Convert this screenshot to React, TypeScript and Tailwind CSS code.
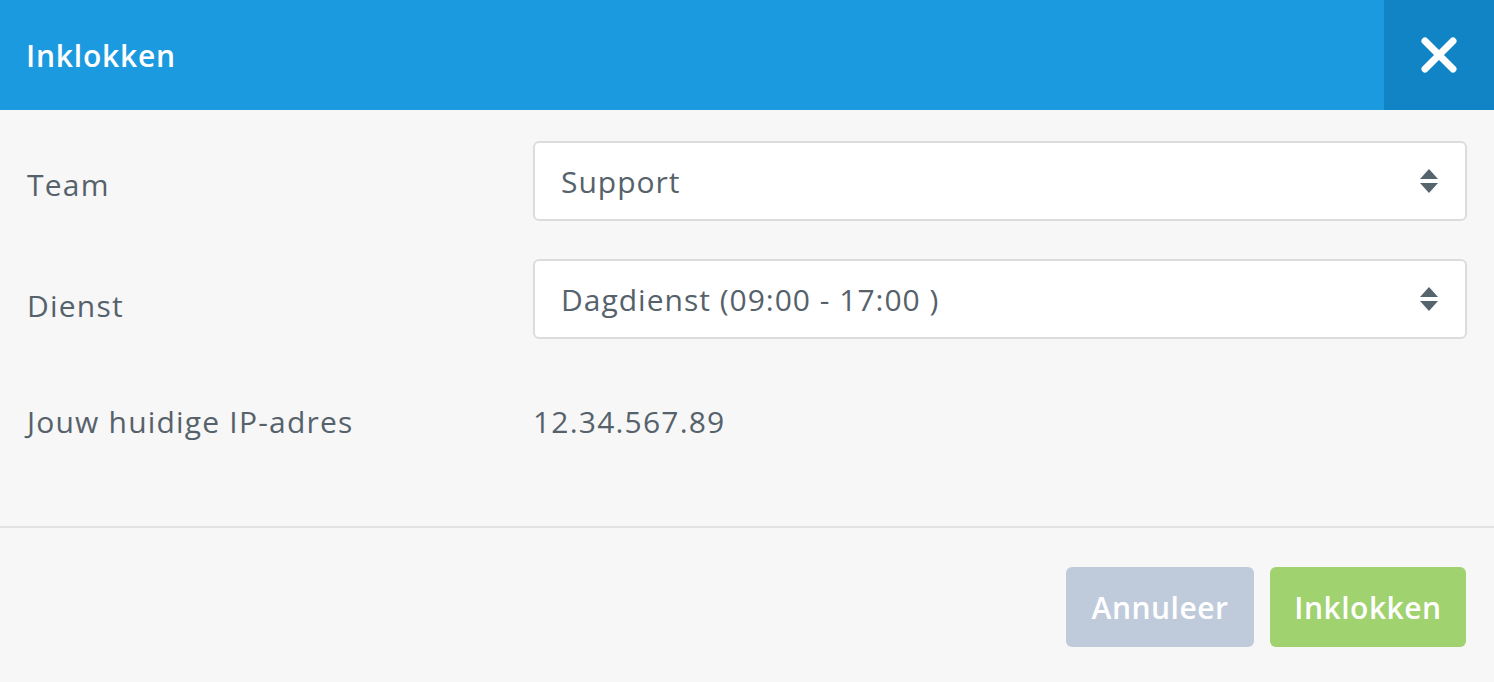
import React from 'react';

const font = { fontFamily: '"Open Sans", Lato, sans-serif' };

function SelectBox({ value }: { value: string }) {
  return (
    <div className="flex h-[80px] flex-1 items-center justify-between rounded-[6px] border-2 border-[#dcdcdc] bg-white pl-[26px] pr-[26px]">
      <span className="text-[30px] tracking-[1px] text-[#56626b]">{value}</span>
      <svg width="20" height="26" viewBox="0 0 20 26" className="fill-[#56646d]">
        <path d="M10 1 L19 11 L1 11 Z" />
        <path d="M1 15 L19 15 L10 25 Z" />
      </svg>
    </div>
  );
}

export default function App() {
  return (
    <div className="flex h-[682px] w-[1494px] flex-col bg-[#f7f7f7]" style={font}>
      <div className="flex h-[110px] bg-[#1b9ae0]">
        <h1 className="flex flex-1 items-center pl-[26px] text-[30px] font-semibold tracking-[0.8px] text-white">
          Inklokken
        </h1>
        <button className="flex w-[110px] items-center justify-center bg-[#1184c6]">
          <svg width="38" height="38" viewBox="0 0 38 38">
            <path d="M5 5 L33 33 M33 5 L5 33" stroke="white" strokeWidth="7" strokeLinecap="round" />
          </svg>
        </button>
      </div>

      <div className="flex flex-col gap-[38px] px-[27px] pt-[31px] pb-[68px] text-[30px] tracking-[1.2px] text-[#56626b]">
        <div className="flex items-center">
          <label className="w-[506px] pt-[6px]">Team</label>
          <SelectBox value="Support" />
        </div>
        <div className="flex items-center">
          <label className="w-[506px] pt-[12px]">Dienst</label>
          <SelectBox value="Dagdienst (09:00 - 17:00 )" />
        </div>
        <div className="flex items-center pt-[22px]">
          <span className="w-[506px]">Jouw huidige IP-adres</span>
          <span>12.34.567.89</span>
        </div>
      </div>

      <div className="mt-[14px] border-t-2 border-[#e2e2e2]" />

      <div className="flex justify-end gap-[16px] px-[28px] pt-[39px]">
        <button className="h-[80px] w-[188px] rounded-[6px] bg-[#bfcbdb] text-[30px] font-semibold tracking-[0.5px] text-white">
          Annuleer
        </button>
        <button className="h-[80px] w-[196px] rounded-[6px] bg-[#a0d270] text-[30px] font-semibold tracking-[0.5px] text-white">
          Inklokken
        </button>
      </div>
    </div>
  );
}
